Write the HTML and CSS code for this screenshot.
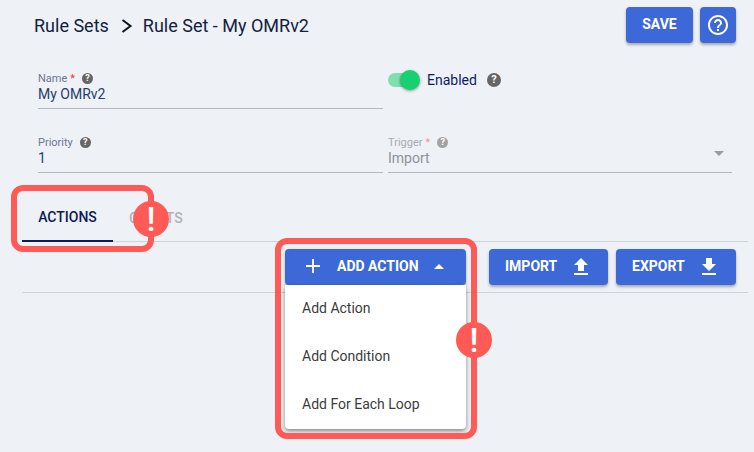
FILE: index.html
```html
<!DOCTYPE html>
<html lang="en">
<head>
  <meta charset="UTF-8">
  <title>Rule Set - My OMRv2</title>
  <link rel="stylesheet" href="styles.css">
</head>
<body>
  <!-- Header -->
  <header class="page-header">
    <div class="crumbs">
      <span>Rule Sets</span>
      <svg class="crumb-sep" width="12" height="14" viewBox="0 0 12 14"><path d="M1.500 1 L9.500 7 L1.500 13" fill="none" stroke="#10131f" stroke-width="2"/></svg>
      <span>Rule Set - My OMRv2</span>
    </div>
    <div class="header-actions">
      <button class="btn btn-save">SAVE</button>
      <button class="btn btn-help">
        <svg width="24" height="24" viewBox="0 0 24 24"><path fill="#fff" d="M11 18h2v-2h-2v2zm1-16C6.480 2 2 6.480 2 12s4.480 10 10 10 10-4.480 10-10S17.520 2 12 2zm0 18c-4.410 0-8-3.590-8-8s3.590-8 8-8 8 3.590 8 8-3.590 8-8 8zm0-14c-2.210 0-4 1.790-4 4h2c0-1.100.9-2 2-2s2 .9 2 2c0 2-3 1.750-3 5h2c0-2.250 3-2.500 3-5 0-2.210-1.790-4-4-4z"/></svg>
      </button>
    </div>
  </header>

  <!-- Form -->
  <section class="form-grid">
    <div class="field">
      <div class="field-label">Name <span class="req">*</span><span class="hint">?</span></div>
      <div class="field-value">My OMRv2</div>
    </div>
    <div class="toggle-row">
      <span class="toggle"><span class="toggle-track"></span><span class="toggle-knob"></span></span>
      <span class="toggle-text">Enabled</span>
      <span class="hint hint-large">?</span>
    </div>
    <div class="field">
      <div class="field-label">Priority<span class="hint">?</span></div>
      <div class="field-value">1</div>
    </div>
    <div class="field field-disabled">
      <div class="field-label">Trigger <span class="req">*</span><span class="hint">?</span></div>
      <div class="field-value">Import</div>
      <span class="select-arrow"></span>
    </div>
  </section>

  <!-- Tabs -->
  <nav class="tabs">
    <a class="tab tab-active">ACTIONS</a>
    <a class="tab">CHARTS</a>
  </nav>

  <!-- Toolbar -->
  <section class="toolbar">
    <div class="add-action">
      <button class="btn btn-add">
        <svg width="18" height="18" viewBox="0 0 18 18"><path d="M9 2v14M2 9h14" stroke="#fff" stroke-width="1.800"/></svg>
        <span>ADD ACTION</span>
        <span class="arrow-up"></span>
      </button>
      <ul class="add-menu">
        <li>Add Action</li>
        <li>Add Condition</li>
        <li>Add For Each Loop</li>
      </ul>
    </div>
    <button class="btn btn-import">
      <span>IMPORT</span>
      <svg width="24" height="24" viewBox="0 0 24 24"><path fill="#fff" d="M9 16h6v-6h4l-7-7-7 7h4zm-4 2h14v2H5z"/></svg>
    </button>
    <button class="btn btn-export">
      <span>EXPORT</span>
      <svg width="24" height="24" viewBox="0 0 24 24"><path fill="#fff" d="M19 9h-4V3H9v6H5l7 7 7-7zM5 18v2h14v-2H5z"/></svg>
    </button>
  </section>

  <!-- Callouts -->
  <div class="callout-box callout-tabs"></div>
  <div class="callout-dot dot-tabs">!</div>
  <div class="callout-box callout-menu"></div>
  <div class="callout-dot dot-menu">!</div>
</body>
</html>
```

FILE: styles.css
```css
* {
  margin: 0;
  padding: 0;
  box-sizing: border-box;
  font-family: Roboto, Arial, sans-serif;
}

body {
  width: 754px;
  height: 452px;
  overflow: hidden;
  background-color: #eef1f6;
  color: #0b1a4f;
  position: relative;
}

/* Buttons */
.btn {
  display: flex;
  align-items: center;
  height: 36px;
  border: none;
  border-radius: 4px;
  background-color: #3d68d8;
  color: white;
  font-size: 14px;
  font-weight: 700;
  box-shadow: 0 2px 3px rgba(0, 0, 0, 0.3);
}
.btn span {
  margin-bottom: 2px;
}

/* Header */
.page-header {
  display: flex;
  justify-content: space-between;
  padding: 7px 18px 0 34px;
}
.crumbs {
  display: flex;
  align-items: center;
  gap: 10px;
  height: 36px;
  font-size: 18px;
  color: #13213f;
}
.crumb-sep {
  margin: 1px 0 0 2px;
}
.header-actions {
  display: flex;
  gap: 7px;
}
.btn-save {
  width: 67px;
  justify-content: center;
  padding-bottom: 2px;
}
.btn-help {
  width: 36px;
  justify-content: center;
}

/* Form */
.form-grid {
  display: grid;
  grid-template-columns: 345px 344px;
  column-gap: 5px;
  row-gap: 26px;
  padding: 28px 0 0 38px;
}
.field {
  position: relative;
  height: 38px;
  border-bottom: 1px solid #b4b7bd;
}
.field-label {
  display: flex;
  align-items: center;
  height: 15px;
  font-size: 11px;
  color: #6f7690;
}
.req {
  color: #e53935;
  margin-left: 3px;
}
.field-value {
  font-size: 14px;
  line-height: 17px;
  color: #27406f;
}
.hint {
  display: inline-block;
  width: 11px;
  height: 11px;
  margin-left: 7px;
  border-radius: 50%;
  background-color: #666;
  color: white;
  font-size: 9px;
  font-weight: 700;
  line-height: 11px;
  text-align: center;
}
.hint-large {
  width: 14px;
  height: 14px;
  margin-left: 10px;
  font-size: 11px;
  line-height: 14px;
}
.field-disabled .field-label {
  color: #a9adb5;
}
.field-disabled .req {
  color: #ec9a9a;
}
.field-disabled .hint {
  background-color: #a3a3a3;
}
.field-disabled .field-value {
  color: #8f9298;
}
.select-arrow {
  position: absolute;
  right: 8px;
  top: 16px;
  border-left: 5px solid transparent;
  border-right: 5px solid transparent;
  border-top: 5px solid #9a9ca1;
}

/* Toggle */
.toggle-row {
  display: flex;
  align-items: center;
  height: 38px;
  padding-bottom: 20px;
  font-size: 14px;
}
.toggle {
  position: relative;
  width: 32px;
  height: 20px;
  margin-right: 7px;
}
.toggle-track {
  position: absolute;
  left: 0;
  top: 3px;
  width: 30px;
  height: 14px;
  border-radius: 7px;
  background-color: #7fdfae;
}
.toggle-knob {
  position: absolute;
  left: 12px;
  top: 0;
  width: 20px;
  height: 20px;
  border-radius: 50%;
  background-color: #16d170;
  box-shadow: 0 1px 3px rgba(0, 0, 0, 0.4);
}
.toggle-text {
  color: #0b1a6a;
}

/* Tabs */
.tabs {
  display: flex;
  margin: 25px 6px 0 22px;
  height: 44px;
  border-bottom: 1px solid #cfd2d8;
}
.tab {
  display: flex;
  align-items: center;
  justify-content: center;
  height: 44px;
  padding-bottom: 5px;
  font-size: 14px;
  font-weight: 500;
  color: #b0b2b6;
}
.tab-active {
  width: 91px;
  margin-right: 16px;
  color: #0b1a5a;
  border-bottom: 2px solid #0b1a5a;
}

/* Toolbar */
.toolbar {
  display: flex;
  align-items: flex-start;
  margin: 0 6px 0 22px;
  height: 51px;
  padding: 7px 12px 0 263px;
  border-bottom: 1px solid #cfd2d8;
}
.add-action {
  position: relative;
  width: 181px;
  margin-right: 23px;
}
.btn-add {
  width: 181px;
  padding-left: 19px;
}
.btn-add svg {
  margin-bottom: 2px;
}
.btn-add span:first-of-type {
  margin-left: 15px;
}
.arrow-up {
  margin-left: 15px;
  border-left: 5px solid transparent;
  border-right: 5px solid transparent;
  border-bottom: 5px solid white;
}
.add-menu {
  position: absolute;
  left: 0;
  top: 36px;
  width: 181px;
  height: 144px;
  list-style: none;
  background-color: white;
  border-radius: 0 0 4px 4px;
  box-shadow: 0 2px 4px rgba(0, 0, 0, 0.45);
  z-index: 2;
}
.add-menu li {
  height: 48px;
  padding-left: 17px;
  font-size: 14px;
  line-height: 46px;
  color: #3c3c3c;
}
.btn-import {
  width: 119px;
  margin-right: 8px;
  padding-left: 16px;
  gap: 12px;
}
.btn-export {
  width: 120px;
  padding-left: 16px;
  gap: 12px;
}

/* Callouts */
.callout-box {
  position: absolute;
  border: 6px solid #ff5a55;
  border-radius: 12px;
  z-index: 3;
}
.callout-tabs {
  left: 11px;
  top: 185px;
  width: 143px;
  height: 67px;
}
.callout-menu {
  left: 275px;
  top: 238px;
  width: 202px;
  height: 201px;
}
.callout-dot {
  position: absolute;
  width: 36px;
  height: 36px;
  border-radius: 50%;
  background-color: #ff5a55;
  color: white;
  font-size: 34px;
  font-weight: 500;
  line-height: 36px;
  text-align: center;
  z-index: 4;
}
.dot-tabs {
  left: 133px;
  top: 201px;
}
.dot-menu {
  left: 456px;
  top: 322px;
}
```
